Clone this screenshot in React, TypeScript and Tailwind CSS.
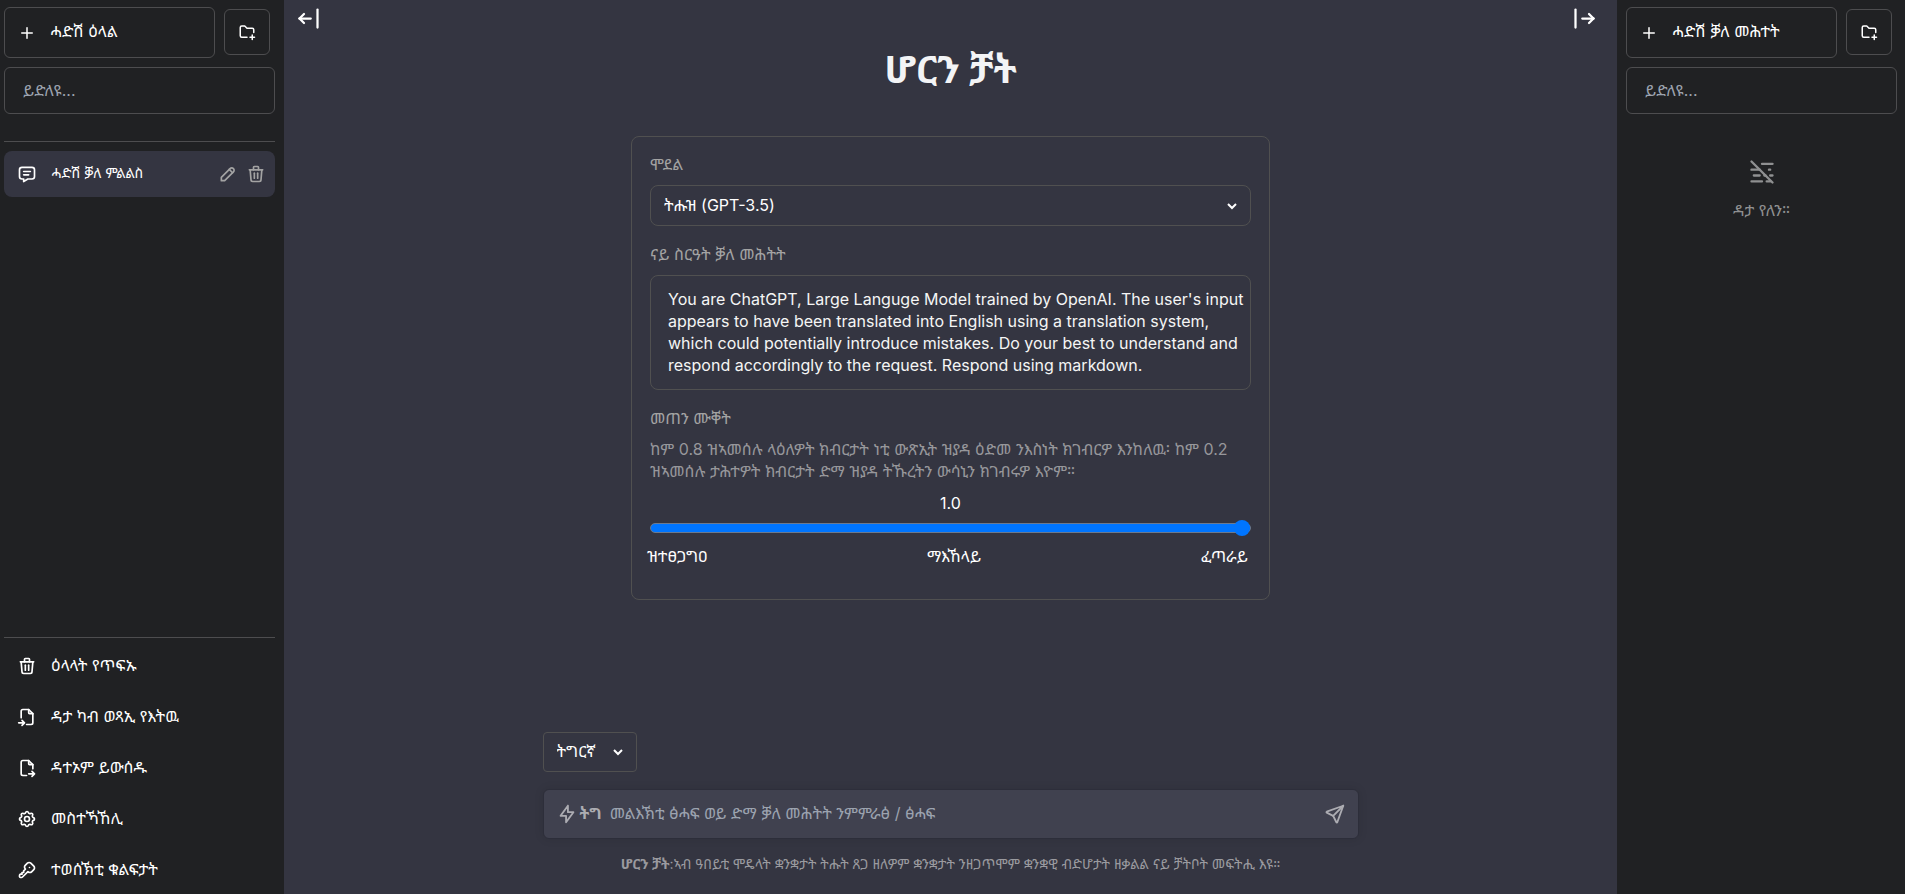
import { useState } from 'react';
import type { ReactNode } from 'react';
import {
  TbArrowBarLeft,
  TbArrowBarRight,
  TbBolt,
  TbFileExport,
  TbFileImport,
  TbFolderPlus,
  TbKey,
  TbMessage,
  TbMistOff,
  TbPencil,
  TbPlus,
  TbSend,
  TbSettings,
  TbTrash,
} from 'react-icons/tb';

function PanelTop({ label }: { label: string }) {
  return (
    <>
      <div className="flex items-start">
        <button
          type="button"
          className="flex h-[51px] w-[211px] shrink-0 items-center gap-3.5 rounded-md border border-[#4d4d4f] px-[13px] text-left text-white"
        >
          <TbPlus size={18} />
          <span className="pb-[3px]">{label}</span>
        </button>
        <button
          type="button"
          aria-label="New folder"
          className="ml-[9px] mt-0.5 flex size-[46px] shrink-0 items-center justify-center rounded-md border border-[#4d4d4f] text-white"
        >
          <TbFolderPlus size={18} />
        </button>
      </div>
      <input
        type="text"
        aria-label="ይድለዩ"
        placeholder="ይድለዩ..."
        className="mt-[9px] h-[47px] w-full rounded-md border border-[#4d4d4f] bg-[#202123] px-[18px] pb-0.5 text-white placeholder:text-[#9ca3af]"
      />
    </>
  );
}

function MenuItem({ icon, label }: { icon: ReactNode; label: string }) {
  return (
    <button type="button" className="flex h-[47px] w-full items-center gap-3.5 px-[13px] text-left text-white">
      {icon}
      <span className="pb-0.5">{label}</span>
    </button>
  );
}

function Chevron() {
  return (
    <svg
      viewBox="0 0 10 8"
      className="pointer-events-none absolute right-[14px] top-1/2 h-2 w-2.5 -translate-y-1/2"
      fill="none"
      stroke="white"
      strokeWidth="2"
      aria-hidden="true"
    >
      <path d="M1 2l4 4 4-4" />
    </svg>
  );
}

export default function App() {
  const [temperature, setTemperature] = useState(1);
  const percent = temperature * 100;

  return (
    <div className="flex h-screen w-full overflow-hidden bg-[#343541] font-['Inter','Noto_Sans_Ethiopic','Noto_Sans',sans-serif] text-base text-white">
      <aside className="flex w-[284px] shrink-0 flex-col bg-[#202123] pl-1 pr-[9px] pt-[7px]">
        <PanelTop label="ሓድሽ ዕላል" />
        <div className="mt-[27px] border-t border-[#4d4d4f] pt-[9px]">
          <div className="flex h-[46px] items-center rounded-lg bg-[#343541] pr-[5px]">
            <button type="button" className="flex flex-1 items-center gap-3.5 px-[13px] text-left">
              <TbMessage size={20} />
              <span className="pb-[3px] text-sm">ሓድሽ ቓለ ምልልስ</span>
            </button>
            <button type="button" aria-label="Rename" className="p-1 text-[#a3a3a3]">
              <TbPencil size={20} />
            </button>
            <button type="button" aria-label="Delete" className="p-1 text-[#a3a3a3]">
              <TbTrash size={20} />
            </button>
          </div>
        </div>
        <nav className="mt-auto flex flex-col gap-1 border-t border-[#4d4d4f] pb-px pt-1">
          <MenuItem icon={<TbTrash size={20} />} label="ዕላላት የጥፍኡ" />
          <MenuItem icon={<TbFileImport size={20} />} label="ዳታ ካብ ወጻኢ የእትዉ" />
          <MenuItem icon={<TbFileExport size={20} />} label="ዳተኦም ይውሰዱ" />
          <MenuItem icon={<TbSettings size={20} />} label="መስተኻኸሊ" />
          <MenuItem icon={<TbKey size={20} />} label="ተወሰኽቲ ቁልፍታት" />
        </nav>
      </aside>

      <main className="flex min-w-0 flex-1 flex-col">
        <div className="flex h-9 items-center justify-between pl-[11px] pr-[19px]">
          <button type="button" aria-label="Hide chats">
            <TbArrowBarLeft size={27} />
          </button>
          <button type="button" aria-label="Hide prompts">
            <TbArrowBarRight size={27} />
          </button>
        </div>
        <h1 className="mt-3 text-center text-[38px] font-bold leading-[42px] text-[#f3f4f6]">ሆርን ቻት</h1>

        <section className="mx-auto mt-[46px] flex w-full max-w-[639px] flex-col rounded-lg border border-[#505050] px-[18px] pb-8 pt-4">
          <label htmlFor="model" className="leading-[22px] text-[#a3a3a3]">
            ሞደል
          </label>
          <div className="relative mt-[10px]">
            <select
              id="model"
              className="h-[41px] w-full appearance-none rounded-lg border border-[#505050] bg-transparent px-[13px] pb-0.5 text-white"
            >
              <option>ትሑዝ (GPT-3.5)</option>
            </select>
            <Chevron />
          </div>
          <label htmlFor="system" className="mt-[17px] leading-[22px] text-[#a3a3a3]">
            ናይ ስርዓት ቓለ መሕትት
          </label>
          <textarea
            id="system"
            rows={4}
            className="mt-[10px] block h-[115px] w-full resize-none overflow-hidden rounded-lg border border-[#505050] bg-transparent py-3 pl-[17px] pr-1 leading-[22px] text-[#f5f5f5]"
            defaultValue="You are ChatGPT, Large Languge Model trained by OpenAI. The user's input appears to have been translated into English using a translation system, which could potentially introduce mistakes. Do your best to understand and respond accordingly to the request. Respond using markdown."
          />
          <label htmlFor="temperature" className="mt-[17px] leading-[22px] text-[#a3a3a3]">
            መጠን ሙቐት
          </label>
          <p className="mt-[9px] leading-[22px] text-[#97979b]">
            ከም 0.8 ዝኣመሰሉ ላዕለዎት ክብርታት ነቲ ውጽኢት ዝያዳ ዕድመ ንእስነት ክገብርዎ እንከለዉ፡ ከም 0.2 ዝኣመሰሉ ታሕተዎት
            ክብርታት ድማ ዝያዳ ትኹረትን ውሳኒን ክገብሩዎ እዮም።
          </p>
          <output htmlFor="temperature" className="mt-[10px] text-center leading-[22px]">
            {temperature.toFixed(1)}
          </output>
          <input
            id="temperature"
            type="range"
            min={0}
            max={1}
            step={0.1}
            value={temperature}
            onChange={(e) => setTemperature(Number(e.target.value))}
            className="mt-[9px] h-[10px] w-full cursor-pointer appearance-none rounded-full border border-[#6b7a90] [&::-webkit-slider-thumb]:size-4 [&::-webkit-slider-thumb]:appearance-none [&::-webkit-slider-thumb]:rounded-full [&::-webkit-slider-thumb]:bg-[#0075ff]"
            style={{ background: `linear-gradient(to right, #0075ff ${percent}%, #efefef ${percent}%)` }}
          />
          <div className="-ml-[3px] mr-[3px] mt-3 flex justify-between leading-[22px]">
            <span>ዝተፀጋግዐ</span>
            <span>ማእኸላይ</span>
            <span>ፈጣራይ</span>
          </div>
        </section>

        <div className="mx-auto mt-auto w-full max-w-[816px]">
          <div className="relative w-[94px]">
            <select
              aria-label="Language"
              className="h-10 w-full appearance-none rounded border border-[#505050] bg-transparent px-[13px] pb-0.5 text-white"
            >
              <option>ትግርኛ</option>
            </select>
            <Chevron />
          </div>
          <form
            className="mt-[17px] flex h-[50px] items-center rounded-md border border-[#2d2e3a] bg-[#40414f] px-3 shadow-[0_0_10px_rgba(0,0,0,0.1)]"
            onSubmit={(e) => e.preventDefault()}
          >
            <button type="button" className="flex items-center gap-0.5 font-bold text-[#acacb2]">
              <TbBolt size={22} />
              <span className="pb-0.5">ትግ</span>
            </button>
            <input
              type="text"
              aria-label="Message"
              placeholder="መልእኽቲ ፅሓፍ ወይ ድማ ቓለ መሕትት ንምምራፅ / ፅሓፍ"
              className="ml-2 min-w-0 flex-1 bg-transparent pb-0.5 text-white outline-none placeholder:text-[#9ca3af]"
            />
            <button type="submit" aria-label="Send" className="text-[#acacb2]">
              <TbSend size={22} />
            </button>
          </form>
          <p className="mt-[15px] pb-5 text-center text-sm leading-5 text-[#9a9a9f]">
            <a href="#about" className="font-bold">
              ሆርን ቻት
            </a>
            :ኣብ ዓበይቲ ሞዴላት ቋንቋታት ትሑት ጸጋ ዘለዎም ቋንቋታት ንዘጋጥሞም ቋንቋዊ ብድሆታት ዘቃልል ናይ ቻትቦት መፍትሒ እዩ።
          </p>
        </div>
      </main>

      <aside className="flex w-[288px] shrink-0 flex-col bg-[#202123] pl-[9px] pr-2 pt-[7px]">
        <PanelTop label="ሓድሽ ቓለ መሕተት" />
        <div className="mt-11 flex flex-col items-center gap-3 text-[#8f9091]">
          <TbMistOff size={28} />
          <span>ዳታ የለን።</span>
        </div>
      </aside>
    </div>
  );
}
